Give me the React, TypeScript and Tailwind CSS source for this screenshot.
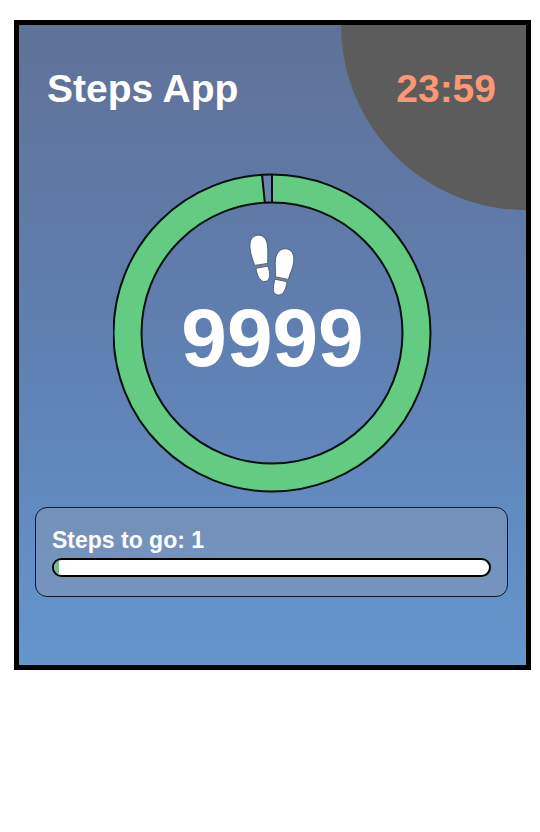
const GOAL = 10000;
const STEPS = 9999;

function StepsRing() {
  return (
    <svg viewBox="0 0 320 320" className="col-start-1 row-start-1 w-full" aria-hidden="true">
      <circle cx="159" cy="160" r="145" fill="none" stroke="#64cb82" strokeWidth="28" />
      <path d="M149 1.3 151.5 29.2A131 131 0 0 1 159 29V1A159 159 0 0 0 149 1.3Z" fill="#6d84ae" />
      <g fill="none" stroke="#03100e" strokeWidth="2">
        <circle cx="159" cy="160" r="158.5" />
        <circle cx="159" cy="160" r="130.5" />
        <path d="M149 1.3 151.8 29.4M159 1V29" />
      </g>
    </svg>
  );
}

function Footprints() {
  return (
    <svg viewBox="1 0 54 70" className="h-[70px] w-[54px]" fill="#ffffff" stroke="#3d4a60" strokeWidth="0.8" aria-hidden="true">
      <path d="M12.5 5.2C18 4.6 21.4 8.5 22.4 15C23.2 21.5 22.6 27 22.7 33.4L9.6 35.4C8.2 30 5.4 25 5 17.5C4.5 10.5 7 6 12.5 5.2Z" />
      <path d="M11 38.2 23 36.2C24 40 25.2 43.5 24.4 47C23.4 51.4 19.6 52.8 16.2 50.4C12.8 48 11.6 42.4 11 38.2Z" />
      <path d="M41 18.8C46.5 19.4 49.2 24 48.8 31C48.4 38 44.6 43.5 43.4 49.4L30.4 46.8C31.1 41 29.8 36 30.4 30C31.1 23 35.4 18.3 41 18.8Z" />
      <path d="M29.8 49.2 42.2 51.8C41.4 56 40.4 60.6 37.6 63.4C34.4 66.2 29.8 65.2 28.6 61.4C27.6 57.8 29.2 53.5 29.8 49.2Z" />
      <path d="M10 36.9 22.8 34.9M30.2 48 42.8 50.6" stroke="#7a8190" strokeWidth="1.6" />
    </svg>
  );
}

export default function App() {
  const left = GOAL - STEPS;
  return (
    <div className="min-h-screen bg-white pt-5 pr-[9px] pl-3.5 font-['Liberation_Sans',Arial,sans-serif] font-bold text-white">
      <main className="relative border-[5px] border-black bg-linear-to-b from-[#5f7297] via-[#5f80b2] to-[#6495cd] pb-[68px]">
        <div className="absolute top-0 right-0 size-[185px] rounded-bl-full bg-[#5c5c5c]" />
        <header className="relative flex items-center justify-between pt-10 pr-[30px] pl-7">
          <h1 className="text-[39px] leading-12">Steps App</h1>
          <time className="text-[39px] leading-12 text-[#fd9674]">23:59</time>
        </header>

        <section className="mx-auto mt-[60px] grid w-[320px] grid-cols-1" aria-label="Steps today">
          <StepsRing />
          <div className="z-10 col-start-1 row-start-1 flex flex-col items-center pt-[57px]">
            <Footprints />
            <p className="text-[82px] leading-[76px]">{STEPS}</p>
          </div>
        </section>

        <section className="mt-3.5 mr-[18px] ml-4 rounded-xl border border-[#0a1a2c] bg-[#a0a0a8]/30 px-4 pt-[18px] pb-[19px]">
          <h2 id="steps-left" className="text-[23px] leading-7">
            Steps to go: {left}
          </h2>
          <div
            role="progressbar"
            aria-labelledby="steps-left"
            aria-valuemin={0}
            aria-valuemax={GOAL}
            aria-valuenow={left}
            className="mt-1 flex h-[19px] overflow-hidden rounded-full border-2 border-black bg-white"
          >
            <div className="w-[5px] bg-[#7cb88f]" />
          </div>
        </section>
      </main>
    </div>
  );
}
